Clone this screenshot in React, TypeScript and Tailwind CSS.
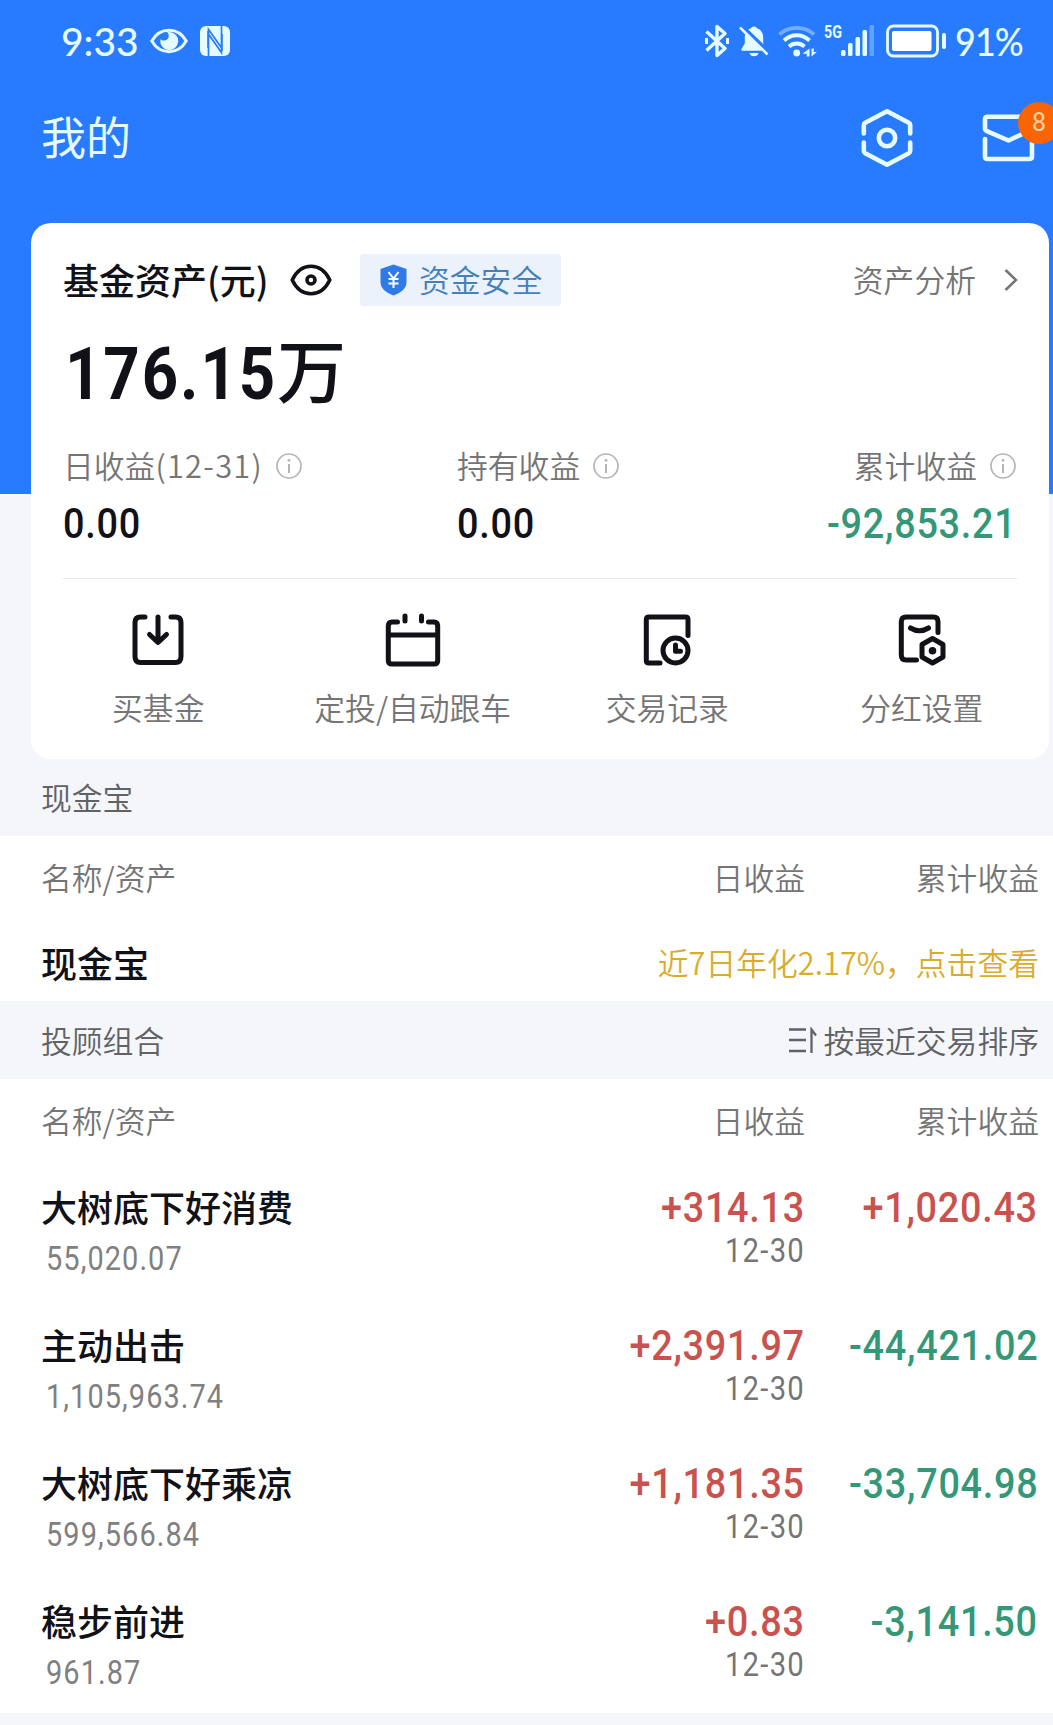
import type { ReactNode } from "react";

const actions = [
  { label: "买基金", icon: <BuyIcon /> },
  { label: "定投/自动跟车", icon: <CalendarIcon /> },
  { label: "交易记录", icon: <RecordIcon /> },
  { label: "分红设置", icon: <DividendIcon /> },
];

const portfolios = [
  {
    name: "大树底下好消费",
    amount: "55,020.07",
    daily: "+314.13",
    date: "12-30",
    total: "+1,020.43",
  },
  {
    name: "主动出击",
    amount: "1,105,963.74",
    daily: "+2,391.97",
    date: "12-30",
    total: "-44,421.02",
  },
  {
    name: "大树底下好乘凉",
    amount: "599,566.84",
    daily: "+1,181.35",
    date: "12-30",
    total: "-33,704.98",
  },
  {
    name: "稳步前进",
    amount: "961.87",
    daily: "+0.83",
    date: "12-30",
    total: "-3,141.50",
  },
];

function StatusBar() {
  return (
    <div className="flex h-[82px] items-center justify-between pr-[29px] pl-[61px] font-[Lato,sans-serif] text-[39px] font-medium text-[#e6fbff]">
      <div className="flex items-center">
        <span className="w-[89px] leading-none">9:33</span>
        <svg width="38" height="26" viewBox="0 0 38 26" fill="none">
          <path d="M1.8 13C10-1.2 28-1.2 36.2 13 28 27.2 10 27.2 1.8 13Z" stroke="currentColor" strokeWidth="3" />
          <path d="M19 4a9 9 0 1 1-8.6 7.2c2.400 2.100 7 1.800 8.100-1.700.7-2.200 0-4.300-1.500-5.200Z" fill="currentColor" />
        </svg>
        <svg className="ml-[12px]" width="30" height="30" viewBox="0 0 30 30" fill="none">
          <rect width="30" height="30" rx="6" fill="currentColor" />
          <path d="M8.500 30V3.500L22 22.500V8M21.500 0v26.500L8 7.500V22" stroke="#287bff" strokeWidth="1.700" />
        </svg>
      </div>

      <div className="flex items-center">
        <svg width="24" height="34" viewBox="0 0 24 34" fill="none" stroke="currentColor" strokeWidth="3.400">
          <path d="M1.500 7.500 20 24.500 12 31.500V2.500L20 9.500 1.500 26.500" strokeLinejoin="round" />
          <path d="M1.500 14v6M22.500 14v6" strokeWidth="3" />
        </svg>
        <svg className="ml-[10px]" width="30" height="32" viewBox="0 0 30 32" fill="none">
          <path d="M15 1.500c1.600 0 2.500.7 2.900 1.800 4 1.300 6.300 4.700 6.300 9v6.200l3.300 5.500c.5.900 0 1.700-1 1.700H3.500c-1 0-1.500-.8-1-1.700l3.300-5.500v-6.200c0-4.300 2.300-7.700 6.300-9 .4-1.100 1.300-1.800 2.900-1.800ZM10.500 28h9c-.6 2.200-2.200 3.300-4.500 3.300S11.100 30.200 10.500 28Z" fill="currentColor" />
          <path d="M2.500.500 30.500 27.500" stroke="#287bff" strokeWidth="3.500" />
          <path d="M1 2.500 28.500 29.500" stroke="currentColor" strokeWidth="2.500" />
        </svg>
        <svg className="ml-[9px]" width="40" height="32" viewBox="0 0 40 32" fill="none" stroke="currentColor" strokeWidth="3.800">
          <path d="M1.500 9.500C10.500.700 27 .700 36 9.500" opacity=".4" />
          <path d="M6 15.500c7.500-7 18-7 25.500 0M11 21.500c4.500-4 11-4 15.500 0" />
          <circle cx="18.700" cy="28" r="3.400" fill="currentColor" stroke="none" />
          <path d="M31.500 23.500v8h-2.700v-2.800L24.500 28.700ZM33.500 31.500v-8h2.300V27h3Z" fill="currentColor" stroke="none" />
        </svg>
        <div className="ml-[6px] flex">
          <span className="h-[16px] w-[17px] origin-left scale-x-75 font-[Roboto,sans-serif] text-[19px] leading-[14px] font-bold">
            5G
          </span>
          <svg width="34" height="32" viewBox="0 0 34 32" fill="currentColor">
            <rect x="0" y="25" width="4.500" height="6" rx="1.500" />
            <rect x="7" y="18" width="4.500" height="13" rx="1.500" />
            <rect x="14.500" y="12" width="4.500" height="19" rx="1.500" />
            <rect x="21.500" y="5" width="4.500" height="26" rx="1.500" />
            <rect x="28.500" y="0" width="4.500" height="31" rx="1" opacity=".3" />
          </svg>
        </div>
        <svg className="ml-[11px]" width="61" height="34" viewBox="0 0 61 34" fill="none">
          <rect x="1.500" y="2" width="50" height="30" rx="6" stroke="currentColor" strokeWidth="2.800" />
          <rect x="6" y="7" width="39.500" height="20" rx="2" fill="#fff" />
          <rect x="56" y="9" width="4" height="16" rx="1.800" fill="currentColor" />
        </svg>
        <span className="ml-[8px] w-[69px] origin-left scale-x-[0.92] leading-none tracking-[-1px]">91%</span>
      </div>
    </div>
  );
}

function Header() {
  return (
    <div className="flex h-[112px] items-center justify-between pr-[18px] pl-[41px]">
      <h1 className="-mt-[5px] text-[45px] leading-none font-normal text-[#e6fbff]">我的</h1>

      <div className="-mt-px flex items-center text-[#e6fbff]">
        <svg width="52" height="60" viewBox="0 0 52 60" fill="none" stroke="currentColor" strokeWidth="4.600" strokeLinecap="round" strokeLinejoin="round">
          <path d="M2.800 25.500v-8.300q0-1.600 1.400-2.400L26 3.200l21.800 11.600q1.400.8 1.400 2.400v8.300M2.800 34.500v8.300q0 1.600 1.400 2.400L26 56.800l21.800-11.600q1.400-.8 1.400-2.400v-8.300" />
          <circle cx="26" cy="30" r="8.200" />
        </svg>
        <div className="relative ml-[69px]">
          <svg width="53" height="48" viewBox="0 0 53 48" fill="none" stroke="currentColor" strokeWidth="4.600" strokeLinecap="round" strokeLinejoin="round">
            <path d="M50 15.500V4q0-1.300-1.500-1.300h-43Q3 2.700 3 5.200v9.600q0 1.400 1.300 2L26.500 26.500 50 15.500" />
            <path d="M3 25v17.500q0 2.500 2.500 2.500H47q3 0 3-2.500V25" />
          </svg>
          <span className="absolute -top-[12px] left-[36px] flex size-[42px] items-center justify-center rounded-full bg-[#fb6404] font-[Roboto,sans-serif] text-[25px] text-[#ffd3a0]">
            8
          </span>
        </div>
      </div>
    </div>
  );
}

function InfoIcon() {
  return (
    <svg width="26" height="26" viewBox="0 0 26 26" fill="none" stroke="#b5b5b5" strokeWidth="1.700">
      <circle cx="13" cy="13" r="12" />
      <path d="M13 11v9" strokeWidth="2" />
      <circle cx="13" cy="7.300" r="1.400" fill="#b5b5b5" stroke="none" />
    </svg>
  );
}

function BuyIcon() {
  return (
    <svg width="52" height="56" viewBox="0 0 52 56" fill="none" stroke="currentColor" strokeWidth="5" strokeLinecap="round" strokeLinejoin="round">
      <path d="M13 5H8.500Q3 5 3 10.500v34Q3 50.500 8.500 50.500h35q5.500 0 5.500-6v-34Q49 5 43.500 5H39M26 5v24M17.500 22.500 26 30.500l8.500-8" />
    </svg>
  );
}

function CalendarIcon() {
  return (
    <svg width="56" height="56" viewBox="0 0 56 56" fill="none" stroke="currentColor" strokeWidth="5" strokeLinecap="round" strokeLinejoin="round">
      <path d="M12.500 10H7Q3.300 10 3.300 14v34.500q0 3.500 3.700 3.500h42q3.700 0 3.700-3.500V14q0-4-3.700-4h-5.500M4 23h48M20 4v5M36.500 4v5" />
    </svg>
  );
}

function RecordIcon() {
  return (
    <svg width="48" height="56" viewBox="0 0 48 56" fill="none" stroke="currentColor" strokeWidth="5" strokeLinecap="round" strokeLinejoin="round">
      <path d="M45 23.500V7.500Q45 5 42.500 5H6Q3.300 5 3.300 7.500v41q0 2.500 2.700 2.500h11" />
      <circle cx="32.500" cy="38.500" r="12.500" />
      <path d="M32.500 33v6.300h5" />
    </svg>
  );
}

function DividendIcon() {
  return (
    <svg width="48" height="56" viewBox="0 0 48 56" fill="none" stroke="currentColor" strokeWidth="5" strokeLinecap="round" strokeLinejoin="round">
      <path d="M40 20.500V9.500Q40 5 35.500 5H8Q3.300 5 3.300 9.500V43q0 5 4.700 5h10.500M12.500 16q9 5.500 18 0M34.500 26.500l10.500 6V45l-10.500 6L24 45V32.500Z" />
      <circle cx="34.500" cy="38.700" r="3.800" fill="currentColor" stroke="none" />
    </svg>
  );
}

function SortIcon() {
  return (
    <svg width="28" height="26" viewBox="0 0 28 26" fill="none" stroke="currentColor" strokeWidth="2.300">
      <path d="M0 2.500h17M0 13h17M0 24h17M22.500 26V2.500l4.500 6" />
    </svg>
  );
}

// Figures are set a little narrower than the face's natural width.
function Figure({ value, tone }: { value: string; tone: string }) {
  return (
    <span className={`inline-block scale-x-90 font-[Roboto,sans-serif] text-[42px] leading-[46px] font-medium tracking-[0.8px] whitespace-nowrap ${tone}`}>
      {value}
    </span>
  );
}

function toneOf(value: string) {
  return value.startsWith("-") ? "text-[#349878]" : "text-[#c9524f]";
}

function Stat({ label, period, children, className }: { label: string; period?: string; children: ReactNode; className: string }) {
  return (
    <div className={`flex flex-col ${className}`}>
      <div className="flex h-[44px] items-center gap-[13px] text-[30.8px] font-[350] text-[#757575]">
        <span className="-mt-px whitespace-nowrap">
          {label}
          {period && <span className="tracking-[1.3px]">{period}</span>}
        </span>
        <InfoIcon />
      </div>
      <div className="mt-[13px] h-[45px]">{children}</div>
    </div>
  );
}

function AssetCard() {
  return (
    <section className="mr-[4px] ml-[31px] flex h-[536px] flex-col rounded-[20px] bg-white">
      <div className="mt-[31px] flex h-[52px] items-center pr-[31px] pl-[32px]">
        <h2 className="-mt-[2px] w-[227px] text-[36px] leading-none font-medium whitespace-nowrap text-[#111118]">
          基金资产(元)
        </h2>
        <svg width="42" height="32" viewBox="0 0 42 32" fill="none" stroke="#111118" strokeWidth="3.600">
          <path d="M2.200 16C6.500 7 13 2.300 21 2.300S35.500 7 39.800 16C35.500 25 29 29.700 21 29.700S6.500 25 2.200 16Z" strokeLinejoin="round" />
          <circle cx="21" cy="16" r="4" />
        </svg>
        <div className="ml-[28px] flex h-[52px] w-[201px] items-center rounded-[3px] bg-[#ebf2fc] pl-[20px]">
          <svg width="27" height="32" viewBox="0 0 27 32" fill="none">
            <path d="M13.500.500 26.500 5v13c0 6.500-5 10.500-13 13.500C5.500 28.500.500 24.500.500 18V5Z" fill="#2f7ae5" />
            <path d="m8.500 8 5 6.500 5-6.500M13.500 14.500V24M8.500 15h10M8.500 19.500h10" stroke="#fff" strokeWidth="2" />
          </svg>
          <span className="-mt-px ml-[12px] text-[30.8px] leading-none font-[350] text-[#4580bd]">资金安全</span>
        </div>
        <span className="-mt-px ml-auto text-[30.8px] leading-none font-[350] text-[#757575]">资产分析</span>
        <svg className="ml-[28px]" width="14" height="22" viewBox="0 0 14 22" fill="none" stroke="#757575" strokeWidth="2.500">
          <path d="m1.500 1 10.500 10L1.500 21" />
        </svg>
      </div>

      <div className="mt-[26px] flex h-[80px] items-center pl-[34px] text-[#111118]">
        <span className="mt-[4px] w-[212px] origin-left scale-x-[0.87] font-[Roboto,sans-serif] text-[73px] leading-none font-bold tracking-[2.200px]">
          176.15
        </span>
        <span className="-mt-[8px] text-[69px] leading-none font-medium">万</span>
      </div>

      <div className="mt-[32px] flex h-[102px] justify-between pr-[33px] pl-[32px]">
        <Stat label="日收益" period="(12-31)" className="w-[394px] items-start [&_.scale-x-90]:origin-left">
          <Figure value="0.00" tone="text-[#111118]" />
        </Stat>
        <Stat label="持有收益" className="flex-1 items-start [&_.scale-x-90]:origin-left">
          <Figure value="0.00" tone="text-[#111118]" />
        </Stat>
        <Stat label="累计收益" className="items-end [&_.scale-x-90]:origin-right">
          <Figure value="-92,853.21" tone="text-[#349878]" />
        </Stat>
      </div>

      <div className="mx-[32px] mt-[32px] h-px bg-[#e8e8ea]" />

      <div className="mt-[33px] grid grid-cols-4">
        {actions.map((action) => (
          <div key={action.label} className="flex flex-col items-center text-[#111118]">
            {action.icon}
            <span className="mt-[23px] text-[30.8px] leading-[32px] font-[350] whitespace-nowrap text-[#757575]">
              {action.label}
            </span>
          </div>
        ))}
      </div>
    </section>
  );
}

function TableHead() {
  return (
    <div className="flex h-[82px] items-center pr-[14px] pl-[41px] text-[30.8px] leading-none font-[350] text-[#757575]">
      <span className="flex-1">名称/资产</span>
      <span>日收益</span>
      <span className="w-[234px] text-right">累计收益</span>
    </div>
  );
}

export default function App() {
  return (
    <main className="h-[1725px] w-[1053px] overflow-hidden bg-[#f5f6fa] font-['Noto_Sans_CJK_SC',sans-serif]">
      <header className="h-[494px] bg-[#287bff]">
        <StatusBar />
        <Header />
        <div className="pt-[29px]">
          <AssetCard />
        </div>
      </header>

      <div className="mt-[265px] flex h-[77px] items-center pb-px pl-[41px] text-[30.8px] leading-none font-[350] text-[#606266]">
        现金宝
      </div>
      <section className="h-[165px] bg-white">
        <TableHead />
        <div className="flex h-[88px] items-center justify-between pr-[14px] pl-[41px]">
          <h3 className="text-[36px] leading-none font-medium text-[#111118]">现金宝</h3>
          <span className="text-[30.8px] leading-none font-[350] text-[#d9ac2b]">近7日年化2.17%，点击查看</span>
        </div>
      </section>

      <div className="flex h-[78px] items-center justify-between pr-[14px] pl-[41px] text-[30.8px] leading-none font-[350] text-[#606266]">
        <span>投顾组合</span>
        <div className="flex items-center gap-[6px]">
          <SortIcon />
          <span>按最近交易排序</span>
        </div>
      </div>
      <section className="h-[634px] bg-white">
        <TableHead />
        {portfolios.map((item) => (
          <div key={item.name} className="flex h-[138px] pt-[24px] pr-[15px] pl-[41px]">
            <div className="flex-1">
              <h3 className="-mt-px text-[36px] leading-[44px] font-medium text-[#111118]">{item.name}</h3>
              <p className="mt-[15px] ml-[5px] origin-left scale-x-[0.89] font-[Roboto,sans-serif] text-[32.5px] leading-[32px] tracking-[1.2px] text-[#808080]">
                {item.amount}
              </p>
            </div>
            <div className="flex flex-col items-end [&>*]:origin-right">
              <Figure value={item.daily} tone={toneOf(item.daily)} />
              <p className="scale-x-90 font-[Roboto,sans-serif] text-[32.5px] leading-[40px] tracking-[1.4px] text-[#757575]">
                {item.date}
              </p>
            </div>
            <div className="w-[233px] text-right [&>*]:origin-right">
              <Figure value={item.total} tone={toneOf(item.total)} />
            </div>
          </div>
        ))}
      </section>
    </main>
  );
}
